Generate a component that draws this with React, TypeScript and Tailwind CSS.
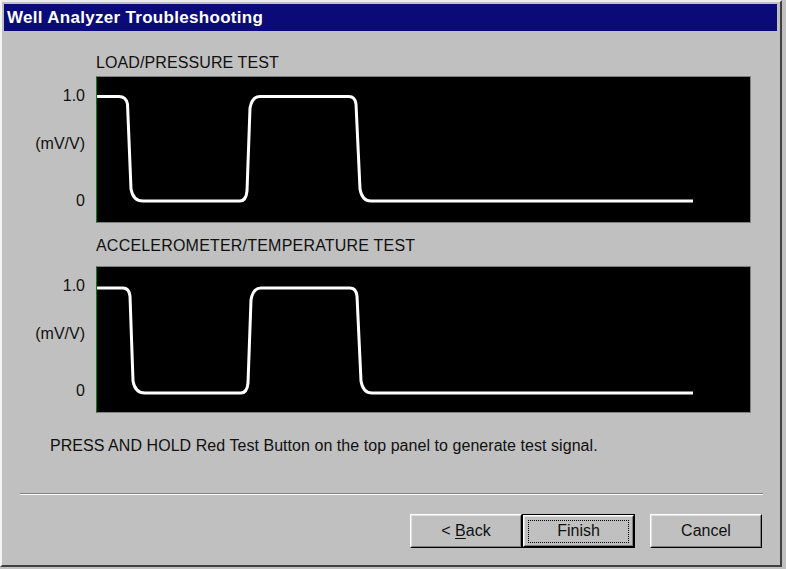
const sans = { fontFamily: '"Liberation Sans", Arial, sans-serif' }

type Wave = {
  high: number
  low: number
  d: string
}

const loadWave: Wave = {
  high: 19.5,
  low: 124,
  d: "M0,19.5 H22 Q29,19.5 30.5,27 L34,112 Q36,124 46,124 H143 Q149,124 150,114 L153,31 Q155,19.5 163,19.5 H252 Q258,19.5 259,27 L263,112 Q265,124 274,124 H596",
}

const accelWave: Wave = {
  high: 21,
  low: 126,
  d: "M0,21 H26 Q32,21 33,29 L36,114 Q38,126 48,126 H144 Q150,126 151,116 L154,33 Q156,21 164,21 H253 Q259,21 260,29 L264,114 Q266,126 275,126 H596",
}

function Trace({ wave }: { wave: Wave }) {
  return (
    <div className="flex">
      <div className="w-[81px] flex flex-col items-end pt-[11px] text-[16px] leading-[18px] text-[#101010]">
        <span>1.0</span>
        <span className="mt-[30px]">(mV/V)</span>
        <span className="mt-[39px]">0</span>
      </div>
      <div className="ml-[11px] w-[655px] h-[147px] bg-black border-t border-r border-b border-[#808080] border-l border-l-[#0e7a0e]">
        <svg width="653" height="145" className="block">
          <path d={wave.d} fill="none" stroke="#ffffff" strokeWidth="3" strokeLinejoin="round" />
        </svg>
      </div>
    </div>
  )
}

function Button({ children, isDefault }: { children: React.ReactNode; isDefault?: boolean }) {
  const face = (
    <div className="h-full border-t border-l border-t-white border-l-white border-r border-b border-r-black border-b-black">
      <div className="h-full flex items-center justify-center border-r border-b border-r-[#808080] border-b-[#808080] border-t border-l border-t-[#dfdfdf] border-l-[#dfdfdf]">
        {isDefault ? (
          <div className="w-[101px] h-[23px] flex items-center justify-center border border-dotted border-black">
            {children}
          </div>
        ) : (
          children
        )}
      </div>
    </div>
  )
  return (
    <div
      className={`h-[34px] text-[16px] text-[#101010] ${isDefault ? "w-[113px] border border-black" : "w-[112px]"}`}
    >
      {face}
    </div>
  )
}

export default function App() {
  return (
    <div className="w-[786px] h-[569px] bg-[#c0c0c0] overflow-hidden" style={sans}>
      <div className="w-[782px] h-[567px] border-t-2 border-l-2 border-t-[#ececec] border-l-[#f4f4f4] border-r-2 border-b-2 border-r-[#404040] border-b-[#404040] p-[2px] flex flex-col">
        <div className="h-[27px] mr-[1px] bg-[#0a0a78] flex items-center pl-[3px] text-white font-bold text-[17px] tracking-[0.3px]">
          Well Analyzer Troubleshooting
        </div>

        <div className="flex flex-col">
          <div className="mt-[23px] ml-[92px] text-[16px] leading-[18px] tracking-[0.1px] text-[#101010]">
            LOAD/PRESSURE TEST
          </div>
          <div className="mt-[4px]">
            <Trace wave={loadWave} />
          </div>

          <div className="mt-[14px] ml-[92px] text-[16px] leading-[18px] tracking-[0.2px] text-[#101010]">
            ACCELEROMETER/TEMPERATURE TEST
          </div>
          <div className="mt-[11px]">
            <Trace wave={accelWave} />
          </div>

          <div className="mt-[24px] ml-[46px] text-[16px] leading-[18px] tracking-[0.05px] text-[#101010]">
            PRESS AND HOLD Red Test Button on the top panel to generate test signal.
          </div>

          <div className="mt-[38px] ml-[16px] w-[743px] h-[2px] border-t border-t-[#808080] border-b border-b-white" />

          <div className="mt-[19px] ml-[406px] flex">
            <Button>
              <span>
                &lt; <span className="underline underline-offset-2">B</span>ack
              </span>
            </Button>
            <Button isDefault>Finish</Button>
            <div className="ml-[15px]">
              <Button>Cancel</Button>
            </div>
          </div>
        </div>
      </div>
    </div>
  )
}
